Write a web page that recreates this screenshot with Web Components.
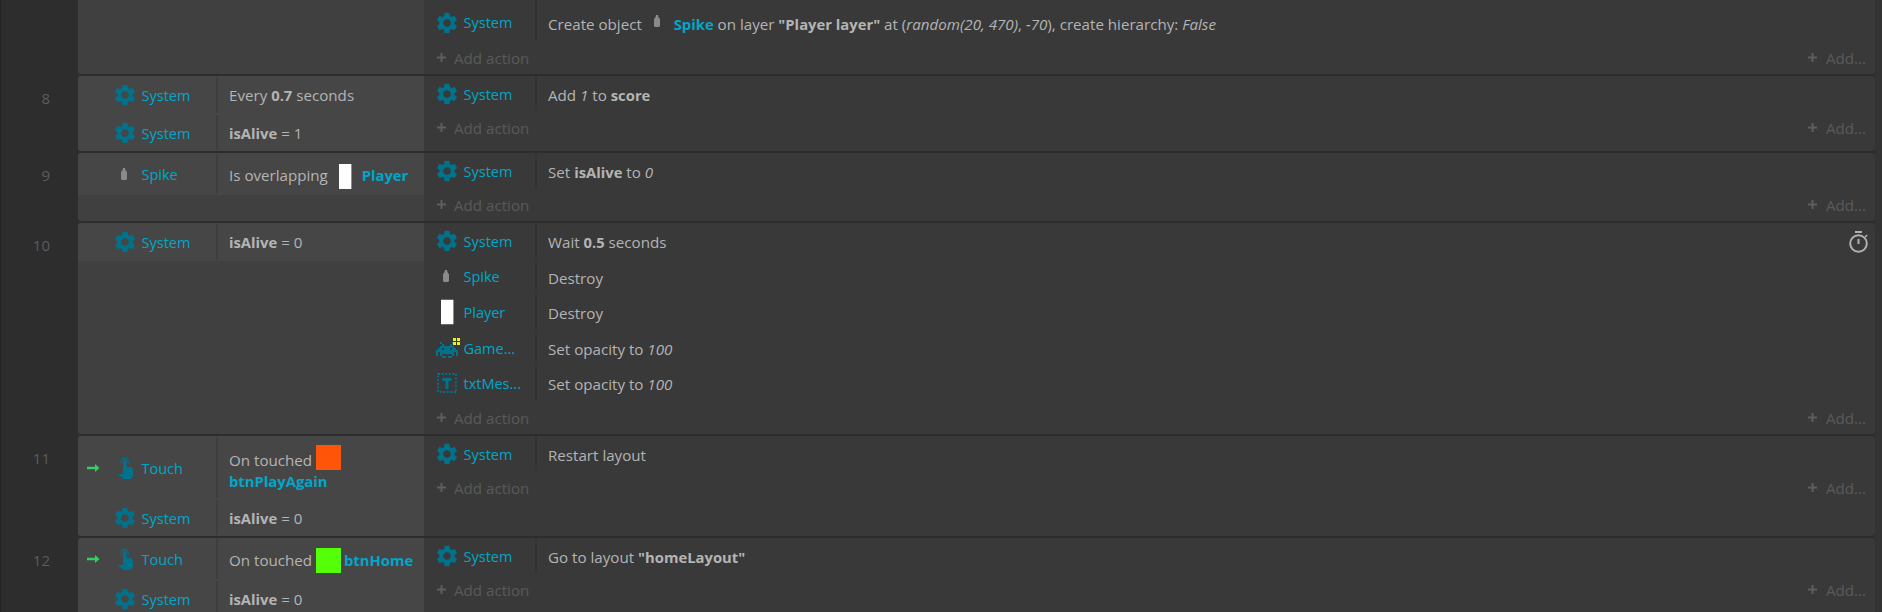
<!DOCTYPE html>
<html><head><meta charset="utf-8">
<style>
html,body{margin:0;padding:0;height:612px;overflow:hidden;background:#2d2d2d}
ev-sheet{margin-top:-32px}
</style></head><body>
<template id="t-sheet"><style>
:host{display:block;font:15.150px "Open Sans",sans-serif;color:#b4b4b4;box-sizing:border-box;padding-right:7px;background:linear-gradient(90deg,#242424 0 1px,#2d2d2d 1px calc(100% - 7px),#333 calc(100% - 7px))}
</style><slot></slot></template>

<template id="t-row"><style>
:host{display:grid;grid-template-columns:78px 346px 1fr;margin-bottom:2px;height:var(--rh,auto)}
.n{color:#5c5c5c;font-size:15px;text-align:right;padding:12px 28px 0 0;box-sizing:border-box}
.c{background:#404040;border-radius:3px 0 0 3px;display:flex;flex-direction:column;overflow:hidden}
.a{display:flex;flex-direction:column;background:#393939;border-radius:0 3px 3px 0;overflow:hidden}
</style><div class="n"></div><div class="c"><slot name="c"></slot></div><div class="a"><slot></slot></div></template>

<template id="t-cond"><style>
:host{display:grid;grid-template-columns:140px 1fr;align-items:stretch;background:#464646;height:var(--h,38px);box-sizing:border-box}
.o{display:flex;align-items:center;position:relative;border-right:2px solid #3e3e3e;margin:1px 0;color:#00a6ca;font-size:14.5px}
.ar{position:absolute;left:9px;top:50%;margin-top:-4px;display:flex}
.ic{position:absolute;left:var(--ix,37px);top:50%;transform:translateY(-50%);display:flex}
.nm{margin-left:63.500px;padding-top:1px}
.t{padding:var(--tp,1px) 0 0 11px;display:flex;align-items:center;line-height:21px}
</style><div class="o"><span class="ar"><slot name="trig"></slot></span><span class="ic"><slot name="ic"></slot></span><span class="nm"><slot name="nm"></slot></span></div><div class="t"><div><slot></slot></div></div></template>

<template id="t-act"><style>
:host{display:grid;grid-template-columns:113px 1fr auto;height:var(--h,35px);flex:none;align-items:stretch;box-sizing:border-box}
.o{display:flex;align-items:center;position:relative;border-right:2px solid #333;color:#00a6ca;font-size:14.5px;margin-bottom:var(--sb,0)}
.ic{position:absolute;left:var(--ix,13px);top:50%;transform:translateY(-50%);margin-top:.5px;display:flex}
.nm{margin-left:39.500px;padding-top:var(--np,1px)}
.t{padding:var(--tp,2.500px) 0 0 11px;display:flex;align-items:center}
.r{display:flex;align-items:center;padding:3px 6px 0 0}
</style><div class="o"><span class="ic"><slot name="ic"></slot></span><span class="nm"><slot name="nm"></slot></span></div><div class="t"><div><slot></slot></div></div><div class="r"><slot name="r"></slot></div></template>

<template id="t-add"><style>
:host{display:flex;justify-content:space-between;align-items:center;flex:none;height:33px;color:#5a5a5a;padding:.5px 9px 0 12.500px;box-sizing:border-box}
span{display:inline-flex;align-items:center;gap:8.500px}
svg{display:block}
</style><span><svg width="9" height="9" viewBox="0 0 9 9"><path d="M3.500 0h2v3.500H9v2H5.500V9h-2V5.500H0v-2h3.500z" fill="#5e5e5e"/></svg>Add action</span><span><svg width="9" height="9" viewBox="0 0 9 9"><path d="M3.500 0h2v3.500H9v2H5.500V9h-2V5.500H0v-2h3.500z" fill="#5e5e5e"/></svg>Add...</span></template>

<script>
const G='M19.14 12.94c.04-.3.06-.61.06-.94 0-.32-.02-.64-.07-.94l2.03-1.58a.49.49 0 0 0 .12-.61l-1.92-3.32a.488.488 0 0 0-.59-.22l-2.39.96c-.5-.38-1.03-.7-1.62-.94l-.36-2.54a.484.484 0 0 0-.48-.41h-3.84c-.24 0-.43.17-.47.41l-.36 2.54c-.59.24-1.13.57-1.62.94l-2.39-.96c-.22-.08-.47 0-.59.22L2.74 8.87c-.12.21-.08.47.12.61l2.03 1.58c-.05.3-.09.63-.09.94s.02.64.07.94l-2.03 1.58a.49.49 0 0 0-.12.61l1.92 3.32c.12.22.37.29.59.22l2.39-.96c.5.38 1.03.7 1.62.94l.36 2.54c.05.24.24.41.48.41h3.84c.24 0 .44-.17.47-.41l.36-2.54c.59-.24 1.13-.56 1.62-.94l2.39.96c.22.08.47 0 .59-.22l1.92-3.32c.12-.22.07-.47-.12-.61l-2.01-1.58zM12 15.600c-1.98 0-3.6-1.62-3.6-3.6s1.62-3.6 3.6-3.6 3.6 1.62 3.6 3.6-1.62 3.6-3.6 3.6z';
const INV=['..X.....X..','...X...X...','..XXXXXXX..','.XX.XXX.XX.','XXXXXXXXXXX','X.XXXXXXX.X','X.X.....X.X','...XX.XX...'];
let invRects='';INV.forEach((r,y)=>[...r].forEach((c,x)=>{if(c==='X')invRects+=`<rect x="${x*2}" y="${y*2+4}" width="2.100" height="2.100"/>`}));
const ICONS={
 gear:`<svg width="20" height="21.500" viewBox="2.600 1.900 18.800 20.200"><path fill="#00728c" d="${G}"/></svg>`,
 spike:`<svg width="6" height="12" viewBox="0 0 6 12"><path fill="#8a8a8a" d="M2 0h2l.6 2.500L6 4v7l-1 1H1l-1-1V4l1.400-1.500z"/></svg>`,
 player:`<svg width="13" height="25" viewBox="0 0 13 25"><rect width="12" height="25" fill="#fff"/><rect x="12" width="1" height="25" fill="#8c8c8c"/></svg>`,
 game:`<svg width="24" height="20" viewBox="0 0 24 20" shape-rendering="crispEdges"><g fill="#00728c">${invRects}</g><path fill="#eef018" d="M17 0h3v3h-3zM21 0h3v3h-3zM17 4h3v3h-3zM21 4h3v3h-3z"/></svg>`,
 text:`<svg width="20" height="20" viewBox="0 0 20 20"><rect x="1" y="1" width="18" height="18" fill="none" stroke="#00728c" stroke-width="1.800" stroke-dasharray="2 1.600"/><path fill="#00728c" d="M5.500 5h9v3h-3v8h-3V8h-3z"/></svg>`,
 touch:`<svg width="15" height="22" viewBox="0 0 15 22"><path fill="none" stroke="#00728c" stroke-width="1.300" d="M3.400 6.500a3.600 3.600 0 1 1 6.400 0"/><path fill="#00728c" d="M5 4.400a1.800 1.800 0 0 1 3.600 0V10h3.400c1.800 0 3 1 3 3v5c0 2.200-1.500 4-3.500 4H5.500c-.8 0-1.500-.5-1.800-1.200L2 18.500H.5c-.5 0-.5-.8 0-1.200 1.200-.8 3-.8 4.500-.3z"/></svg>`,
 arrow:`<svg width="12.500" height="8" viewBox="0 0 12.500 8"><path fill="#2fd160" d="M8 0l4.500 4L8 8V5.200H0V2.800h8z"/></svg>`,
 watch:`<svg width="20" height="22" viewBox="0 0 20 22"><g fill="none" stroke="#b0b0b0"><circle cx="9.500" cy="12.500" r="8.300" stroke-width="2"/><path d="M6 1h7M9.500 8v5" stroke-width="2"/><path d="M16.200 6l2-2" stroke-width="1.600"/></g></svg>`,
 orange:`<svg width="25" height="25"><rect width="25" height="25" fill="#ff5508"/></svg>`,
 green:`<svg width="25" height="25"><rect width="25" height="25" fill="#55ff08"/></svg>`
};
function def(tag,tpl){customElements.define(tag,class extends HTMLElement{constructor(){super();this.attachShadow({mode:'open'}).append(document.getElementById(tpl).content.cloneNode(true))}})}
def('ev-sheet','t-sheet');def('ev-cond','t-cond');def('ev-act','t-act');def('ev-add','t-add');
customElements.define('ev-row',class extends HTMLElement{constructor(){super();this.attachShadow({mode:'open'}).append(document.getElementById('t-row').content.cloneNode(true))}
 connectedCallback(){this.shadowRoot.querySelector('.n').textContent=this.getAttribute('n')||''}});
customElements.define('ev-icon',class extends HTMLElement{constructor(){super();this.attachShadow({mode:'open'})}
 connectedCallback(){this.shadowRoot.innerHTML='<style>:host{display:inline-flex;vertical-align:middle}svg{display:block}</style>'+ICONS[this.getAttribute('k')]}});
customElements.define('ev-obj',class extends HTMLElement{constructor(){super();this.attachShadow({mode:'open'}).innerHTML='<style>:host{display:inline;color:#00a6ca;font-weight:700;font-size:14.800px}</style><slot></slot>'}});
customElements.define('ev-b',class extends HTMLElement{constructor(){super();this.attachShadow({mode:'open'}).innerHTML='<style>:host{display:inline;font-weight:700;font-size:14.800px}</style><slot></slot>'}});
customElements.define('ev-i',class extends HTMLElement{constructor(){super();this.attachShadow({mode:'open'}).innerHTML='<style>:host{display:inline;font-style:italic}</style><slot></slot>'}});
</script>
<ev-sheet>
<ev-row style="--rh:106px"><ev-act></ev-act><ev-act style="--h:38px;--tp:4px"><ev-icon k="gear" slot="ic"></ev-icon><span slot="nm">System</span>Create object <ev-icon k="spike" style="margin:0 10px 0 8px;vertical-align:3px"></ev-icon> <ev-obj>Spike</ev-obj> on layer <ev-b>"Player layer"</ev-b> at (<ev-i>random(20, 470)</ev-i>, <ev-i>-70</ev-i>), create hierarchy: <ev-i>False</ev-i></ev-act><ev-add></ev-add></ev-row>

<ev-row n="8" style="--rh:75px"><ev-cond slot="c"><ev-icon k="gear" slot="ic"></ev-icon><span slot="nm">System</span>Every <ev-b>0.7</ev-b> seconds</ev-cond><ev-cond slot="c" style="--h:37px"><ev-icon k="gear" slot="ic"></ev-icon><span slot="nm">System</span><ev-b>isAlive</ev-b> = 1</ev-cond><ev-act><ev-icon k="gear" slot="ic"></ev-icon><span slot="nm">System</span>Add <ev-i>1</ev-i> to <ev-b>score</ev-b></ev-act><ev-add></ev-add></ev-row>

<ev-row n="9" style="--rh:68px"><ev-cond slot="c" style="--h:42px;--ix:43px;--tp:4px"><ev-icon k="spike" slot="ic"></ev-icon><span slot="nm">Spike</span>Is overlapping <ev-icon k="player" style="margin:0 6px 0 7px;vertical-align:-8px"></ev-icon> <ev-obj>Player</ev-obj></ev-cond><ev-act><ev-icon k="gear" slot="ic"></ev-icon><span slot="nm">System</span>Set <ev-b>isAlive</ev-b> to <ev-i>0</ev-i></ev-act><ev-add></ev-add></ev-row>

<ev-row n="10" style="--rh:211px;--sb:1px"><ev-cond slot="c"><ev-icon k="gear" slot="ic"></ev-icon><span slot="nm">System</span><ev-b>isAlive</ev-b> = 0</ev-cond><ev-act style="--h:35.600px;--np:3px"><ev-icon k="gear" slot="ic"></ev-icon><span slot="nm">System</span>Wait <ev-b>0.5</ev-b> seconds<ev-icon k="watch" slot="r"></ev-icon></ev-act><ev-act style="--h:35.600px;--ix:19px;--np:2px"><ev-icon k="spike" slot="ic"></ev-icon><span slot="nm">Spike</span>Destroy</ev-act><ev-act style="--h:35.600px;--ix:17px;--np:2px"><ev-icon k="player" slot="ic"></ev-icon><span slot="nm">Player</span>Destroy</ev-act><ev-act style="--h:35.600px;--ix:12px;--np:2px"><ev-icon k="game" slot="ic"></ev-icon><span slot="nm">Game...</span>Set opacity to <ev-i>100</ev-i></ev-act><ev-act style="--h:35.600px"><ev-icon k="text" slot="ic"></ev-icon><span slot="nm">txtMes...</span>Set opacity to <ev-i>100</ev-i></ev-act><ev-add></ev-add></ev-row>

<ev-row n="11" style="--rh:100px"><ev-cond slot="c" style="--h:63px;--ix:40px"><ev-icon k="arrow" slot="trig"></ev-icon><ev-icon k="touch" slot="ic"></ev-icon><span slot="nm">Touch</span>On touched <ev-icon k="orange" style="margin-left:0;vertical-align:-4px"></ev-icon><br><ev-obj>btnPlayAgain</ev-obj></ev-cond><ev-cond slot="c" style="--h:37px"><ev-icon k="gear" slot="ic"></ev-icon><span slot="nm">System</span><ev-b>isAlive</ev-b> = 0</ev-cond><ev-act style="--np:2px"><ev-icon k="gear" slot="ic"></ev-icon><span slot="nm">System</span>Restart layout</ev-act><ev-add></ev-add></ev-row>

<ev-row n="12" style="--rh:80px"><ev-cond slot="c" style="--h:42px;--ix:40px;--tp:2px"><ev-icon k="arrow" slot="trig"></ev-icon><ev-icon k="touch" slot="ic"></ev-icon><span slot="nm">Touch</span>On touched <ev-icon k="green" style="margin-right:-1px;vertical-align:-7px"></ev-icon> <ev-obj>btnHome</ev-obj></ev-cond><ev-cond slot="c"><ev-icon k="gear" slot="ic"></ev-icon><span slot="nm">System</span><ev-b>isAlive</ev-b> = 0</ev-cond><ev-act><ev-icon k="gear" slot="ic"></ev-icon><span slot="nm">System</span>Go to layout <ev-b>"homeLayout"</ev-b></ev-act><ev-add></ev-add></ev-row>
</ev-sheet>
</body></html>
